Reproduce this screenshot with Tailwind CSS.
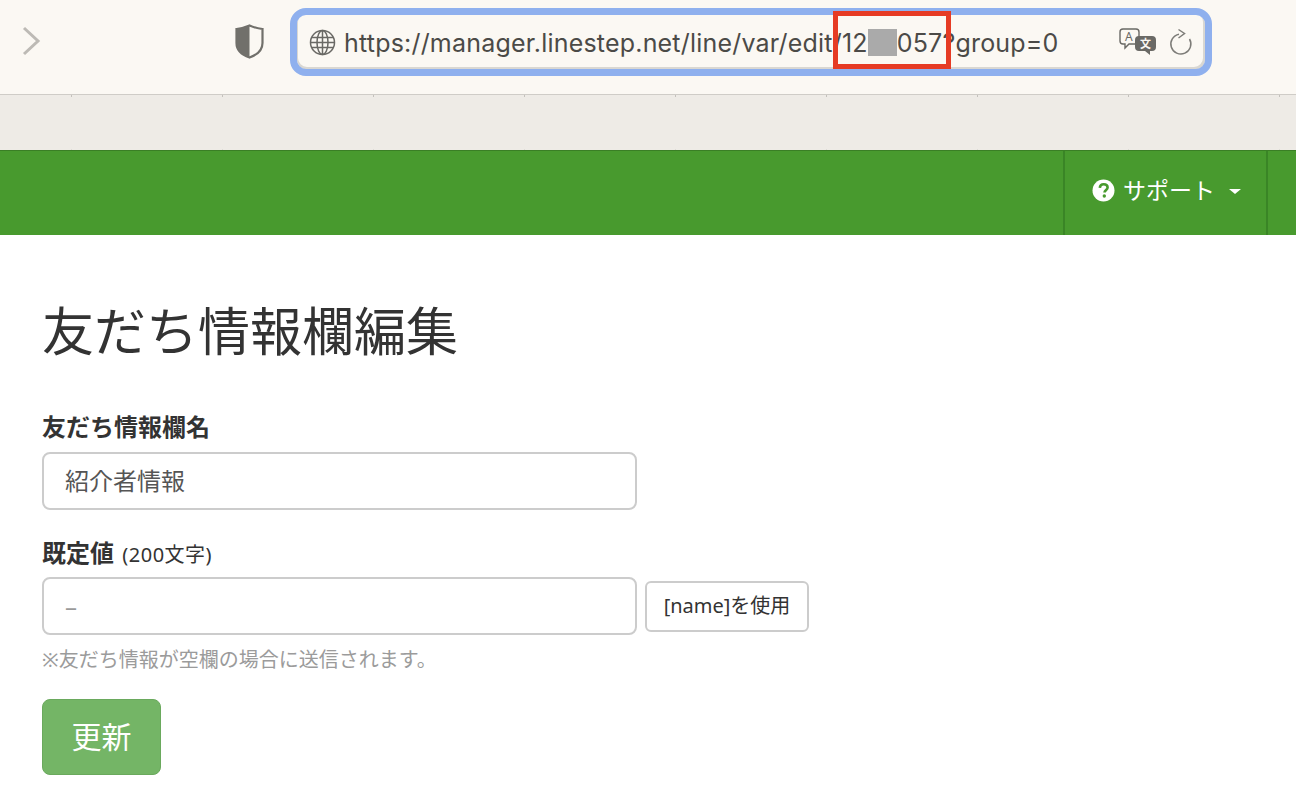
<!DOCTYPE html>
<html lang="ja"><head><meta charset="utf-8">
<script src="https://cdn.jsdelivr.net/npm/@tailwindcss/browser@4"></script>
</head>
<body class="w-[1296px] h-[804px] overflow-hidden bg-white font-['Noto_Sans','Noto_Sans_CJK_JP',sans-serif] text-[#333]">
<div class="h-[94px] bg-[#fbf8f3] relative">
  <svg class="absolute left-[21px] top-[25px]" width="20" height="32" viewBox="0 0 20 32" fill="none" stroke="#bdbab5" stroke-width="3"><path d="M3 3 L17 16 L3 29"/></svg>
  <svg class="absolute left-[235px] top-[24px]" width="29" height="35" viewBox="0 0 29 35"><path d="M14.5 1.5 C10 3.5 6 4.5 1.5 5 V19 C1.5 26 7 31 14.5 33.5 C22 31 27.5 26 27.5 19 V5 C23 4.500 19 3.500 14.500 1.500 Z" fill="#fbf8f3" stroke="#71706b" stroke-width="2.200"/><path d="M14.500 1.500 C10 3.500 6 4.500 1.500 5 V19 C1.500 26 7 31 14.500 33.500 Z" fill="#71706b"/></svg>
  <div class="absolute left-[290px] top-[8px] w-[922px] h-[68px] rounded-[16px] border-[7px] border-[#8fb0ee] bg-[#fbf8f3] flex items-center shadow-[inset_1px_-2px_0_#d9d7d2,inset_-2px_-2px_0_#d9d7d2]">
    <svg class="ml-[12px] shrink-0" width="27" height="27" viewBox="0 0 27 27" fill="none" stroke="#6a6965" stroke-width="1.500"><circle cx="13.500" cy="13.500" r="12"/><ellipse cx="13.500" cy="13.500" rx="5.500" ry="12"/><path d="M13.500 1.500V25.500M2.500 8.500H24.500M2.500 18.500H24.500M1.500 13.500H25.500"/></svg>
    <div class="ml-[8px] text-[25px] leading-[30px] tracking-[0.2px] text-[#4b4a47] whitespace-nowrap flex items-center font-['Inter',sans-serif]"><span class="pt-[2px]">https://manager.linestep.net/line/var/edit/12</span><span class="inline-block w-[29px] h-[27px] bg-[#aaaaaa]"></span><span class="pt-[2px]">057?group=0</span></div>
    <svg class="absolute left-[822px] top-[13px]" width="38" height="28" viewBox="0 0 38 28"><path d="M4 1 H17 Q20 1 20 4 V13 Q20 16 17 16 H10 L6 20 V16 H4 Q1 16 1 13 V4 Q1 1 4 1 Z" fill="#fbf8f3" stroke="#6a6965" stroke-width="1.400"/><text x="6" y="13" font-size="12" fill="#6a6965">A</text><path d="M20 8 H33 Q37 8 37 12 V19 Q37 23 33 23 H31 V27 L26 23 H20 Q16 23 16 19 V12 Q16 8 20 8 Z" fill="#6a6965"/><text x="21" y="20" font-size="11" font-weight="700" fill="#fbf8f3">文</text></svg>
    <svg class="absolute left-[872px] top-[13px]" width="24" height="28" viewBox="0 0 24 28" fill="none" stroke="#7d7c78" stroke-width="1.500"><path d="M10 6.200 A10 10 0 1 0 20.500 11"/><path d="M9.500 1.500 L15.500 5.500 L9.500 10" /></svg>
  </div>
  <div class="absolute left-[833px] top-[11px] w-[118px] h-[58px] border-[5px] border-[#e63b24]"></div>
</div>
<div class="h-[56px] bg-[#eeebe6] border-t border-t-[#cfccc7] flex flex-col justify-between">
  <div class="flex pl-[71px] gap-[150px]"><i class="w-px h-[2px] bg-[#c4c1bc]"></i><i class="w-px h-[2px] bg-[#c4c1bc]"></i><i class="w-px h-[2px] bg-[#c4c1bc]"></i><i class="w-px h-[2px] bg-[#c4c1bc]"></i><i class="w-px h-[2px] bg-[#c4c1bc]"></i><i class="w-px h-[2px] bg-[#c4c1bc]"></i><i class="w-px h-[2px] bg-[#c4c1bc]"></i><i class="w-px h-[2px] bg-[#c4c1bc]"></i><i class="w-px h-[2px] bg-[#c4c1bc]"></i></div>
  <div class="flex pl-[71px] gap-[150px]"><i class="w-px h-[1px] bg-[#dedbd6]"></i><i class="w-px h-[1px] bg-[#dedbd6]"></i><i class="w-px h-[1px] bg-[#dedbd6]"></i><i class="w-px h-[1px] bg-[#dedbd6]"></i><i class="w-px h-[1px] bg-[#dedbd6]"></i><i class="w-px h-[1px] bg-[#dedbd6]"></i><i class="w-px h-[1px] bg-[#dedbd6]"></i><i class="w-px h-[1px] bg-[#dedbd6]"></i><i class="w-px h-[1px] bg-[#dedbd6]"></i></div>
</div>
<header class="h-[85px] bg-[#489a2e] border-t border-t-[#3a7f25] flex justify-end pr-[28px]">
  <div class="w-[205px] border-x-2 border-x-[#3a8526] flex items-center pl-[27px] pb-[6px] text-white">
    <svg width="23" height="23" viewBox="0 0 23 23"><circle cx="11.500" cy="11.500" r="11" fill="#fff"/><path d="M7.800 8.800 C8 6.300 9.700 5.200 11.700 5.200 C14 5.200 15.600 6.500 15.600 8.400 C15.600 10.800 12.500 11 12.500 13.500" fill="none" stroke="#489a2e" stroke-width="2.600"/><circle cx="12.300" cy="17" r="1.700" fill="#489a2e"/></svg>
    <span class="ml-[8px] text-[23px] leading-none">サポート</span>
    <span class="ml-[14px] mt-[3px] w-0 h-0 border-x-[6px] border-x-transparent border-t-[5px] border-t-white"></span>
  </div>
</header>
<main class="pl-[42px]">
  <h1 class="mt-[64px] text-[52px] leading-[64px] font-normal">友だち情報欄編集</h1>
  <label class="block mt-[47px] text-[24px] leading-[34px] font-bold">友だち情報欄名</label>
  <div class="mt-[8px] w-[595px] h-[58px] rounded-[8px] border-2 border-[#cccccc] flex items-center pl-[21px] text-[24px] text-[#555]">紹介者情報</div>
  <div class="mt-[26px] text-[24px] leading-[34px] font-bold">既定値 <span class="font-normal text-[20px] ml-[2px] tracking-[0.5px]">(200文字)</span></div>
  <div class="mt-[5px] flex items-center gap-[8px]">
    <div class="w-[595px] h-[58px] rounded-[8px] border-2 border-[#cccccc] flex items-center pl-[21px] text-[24px] text-[#999]">–</div>
    <div class="w-[164px] h-[51px] rounded-[6px] border-2 border-[#cccccc] flex items-center justify-center text-[20px]">[name]を使用</div>
  </div>
  <p class="mt-[10px] text-[20px] leading-[30px] text-[#9b9b9b]">※友だち情報が空欄の場合に送信されます。</p>
  <div class="mt-[24px] w-[119px] h-[76px] rounded-[8px] bg-[#74b566] border border-[#6aa95d] flex items-center justify-center pb-[2px] text-white text-[30px]">更新</div>
</main>
</body></html>
